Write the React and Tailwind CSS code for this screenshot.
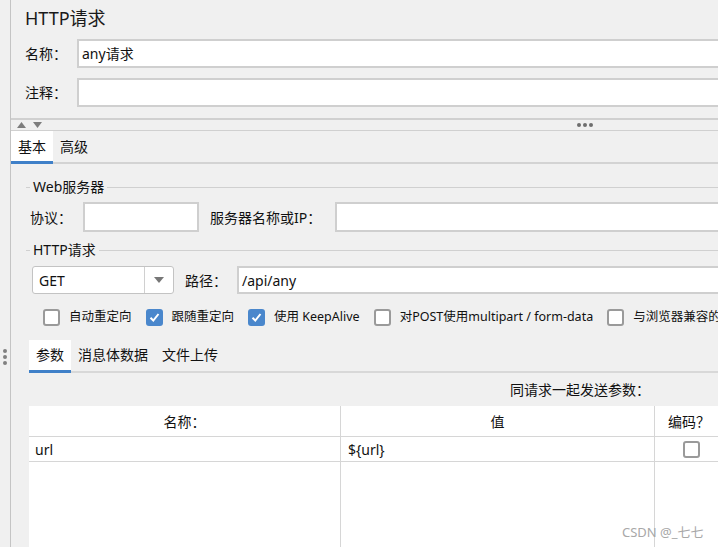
import React from "react";

const font = { fontFamily: '"Noto Sans", "Noto Sans CJK SC", sans-serif' };

const Legend = ({ text }) => (
  <div className="flex items-center h-[20px] ml-[15px]">
    <div className="w-[4px] h-px bg-[#d0d0d0]" />
    <span className="mx-[3px] text-[14px] leading-[20px] text-[#111]">{text}</span>
    <div className="flex-1 h-px bg-[#d0d0d0]" />
  </div>
);

const CheckBox = ({ checked, label }) => (
  <div className="flex items-center gap-[9px] shrink-0">
    {checked ? (
      <div className="w-[17px] h-[17px] rounded-[3px] bg-[#4a87cc] flex items-center justify-center">
        <svg width="11" height="11" viewBox="0 0 11 11">
          <path d="M1.5 5.8 L4.3 8.5 L9.5 2" stroke="white" strokeWidth="2" fill="none" />
        </svg>
      </div>
    ) : (
      <div className="w-[17px] h-[17px] rounded-[3px] border-2 border-[#9a9a9a] bg-white" />
    )}
    {label && <span className="text-[12.5px] text-[#111] whitespace-nowrap">{label}</span>}
  </div>
);

const Input = ({ className = "", value }) => (
  <div className={"h-full bg-white border-2 border-[#cfcfcf] flex items-center px-[3px] text-[14px] text-[#111] " + className}>
    {value}
  </div>
);

const App = () => {
  return (
    <div className="w-[718px] h-[547px] overflow-hidden bg-[#f0f0f0] flex relative" style={font}>
      {/* left strip */}
      <div className="w-[11px] shrink-0 border-r border-[#c4c4c4] flex flex-col items-start">
        <div className="mt-[349px] ml-[3px] flex flex-col gap-[2px]">
          <div className="w-[4px] h-[4px] rounded-full bg-[#808080]" />
          <div className="w-[4px] h-[4px] rounded-full bg-[#808080]" />
          <div className="w-[4px] h-[4px] rounded-full bg-[#808080]" />
        </div>
      </div>

      <div className="w-[780px] shrink-0 flex flex-col">
        <div className="h-[39px] pl-[14px] pt-[5px]">
          <span className="text-[18px] leading-[26px] text-[#1a1a1a]">HTTP请求</span>
        </div>
        <div className="h-[29px] flex items-center pl-[14px]">
          <span className="w-[52px] text-[14px] text-[#111]">名称：</span>
          <Input className="flex-1" value="any请求" />
        </div>
        <div className="h-[29px] mt-[10px] flex items-center pl-[14px]">
          <span className="w-[52px] text-[14px] text-[#111]">注释：</span>
          <Input className="flex-1" />
        </div>

        {/* splitter */}
        <div className="mt-[11px] border-t-2 border-b border-[#d0d0d0] h-[13px] flex items-center">
          <div className="flex items-center gap-[7px] ml-[6px]">
            <svg width="9" height="6" viewBox="0 0 9 6"><path d="M0 6 L4.5 0 L9 6 Z" fill="#7d7d7d" /></svg>
            <svg width="9" height="6" viewBox="0 0 9 6"><path d="M0 0 L9 0 L4.5 6 Z" fill="#7d7d7d" /></svg>
          </div>
          <div className="ml-[535px] flex gap-[2px]">
            <div className="w-[4px] h-[4px] rounded-full bg-[#6e6e6e]" />
            <div className="w-[4px] h-[4px] rounded-full bg-[#6e6e6e]" />
            <div className="w-[4px] h-[4px] rounded-full bg-[#6e6e6e]" />
          </div>
        </div>

        {/* tabs */}
        <div className="flex items-start border-b-2 border-[#d3d3d3]">
          <div className="h-[33px] -mb-[2px] px-[7px] pt-[1px] bg-white border-b-[3px] border-[#3f80c8] text-[14px] leading-[30px] text-[#111]">基本</div>
          <div className="h-[31px] px-[7px] pt-[1px] text-[14px] leading-[30px] text-[#111]">高级</div>
        </div>

        <div className="mt-[13px]">
          <Legend text="Web服务器" />
        </div>
        <div className="mt-[5px] h-[30px] flex items-center ml-[19px]">
          <span className="w-[53px] text-[14px] text-[#111]">协议：</span>
          <Input className="w-[116px]" />
          <span className="ml-[11px] w-[125px] text-[14px] text-[#111] whitespace-nowrap">服务器名称或IP：</span>
          <Input className="flex-1" />
        </div>

        <div className="mt-[8px]">
          <Legend text="HTTP请求" />
        </div>
        <div className="mt-[6px] h-[28px] flex items-center ml-[21px]">
          <div className="w-[142px] h-full bg-white border border-[#c3c3c3] rounded-[3px] flex">
            <div className="w-[112px] border-r border-[#d0d0d0] flex items-center pl-[6px] text-[14px] text-[#111]">GET</div>
            <div className="flex-1 flex items-center justify-center">
              <svg width="10" height="6" viewBox="0 0 10 6"><path d="M0 0 L10 0 L5 6 Z" fill="#777" /></svg>
            </div>
          </div>
          <span className="ml-[11px] w-[52px] text-[14px] text-[#111]">路径：</span>
          <Input className="flex-1" value="/api/any" />
        </div>

        <div className="mt-[13px] h-[20px] flex items-center gap-[14px] ml-[32px]">
          <CheckBox label="自动重定向" />
          <CheckBox checked label="跟随重定向" />
          <CheckBox checked label="使用 KeepAlive" />
          <CheckBox label="对POST使用multipart / form-data" />
          <CheckBox label="与浏览器兼容的头" />
        </div>

        {/* sub tabs */}
        <div className="mt-[13px] ml-[18px] flex items-start border-b-2 border-[#d8d8d8]">
          <div className="h-[33px] -mb-[2px] px-[7px] bg-white border-b-[3px] border-[#3f80c8] text-[14px] leading-[30px] text-[#111]">参数</div>
          <div className="h-[31px] px-[7px] text-[14px] leading-[30px] text-[#111]">消息体数据</div>
          <div className="h-[31px] px-[7px] text-[14px] leading-[30px] text-[#111]">文件上传</div>
        </div>
        <div className="h-[33px] ml-[18px] flex items-center pl-[481px] text-[14px] text-[#111] whitespace-nowrap">
          同请求一起发送参数：
        </div>

        {/* table */}
        <div className="flex-1 ml-[18px] bg-white grid grid-cols-[312px_314px_80px] grid-rows-[31px_25px_1fr]">
          <div className="border-r border-b border-[#d6d6d6] flex items-center justify-center text-[14px] text-[#111]">名称：</div>
          <div className="border-r border-b border-[#d6d6d6] flex items-center justify-center text-[14px] text-[#111]">值</div>
          <div className="border-b border-[#d6d6d6] flex items-center pl-[13px] text-[14px] text-[#111]">编码？</div>
          <div className="border-r border-b border-[#d6d6d6] flex items-center pl-[6px] text-[14px] text-[#111]">url</div>
          <div className="border-r border-b border-[#d6d6d6] flex items-center pl-[7px] text-[14px] text-[#111]">{"${url}"}</div>
          <div className="border-b border-[#d6d6d6] flex items-center pl-[28px]">
            <CheckBox />
          </div>
          <div className="border-r border-[#d6d6d6]" />
          <div className="border-r border-[#d6d6d6]" />
          <div />
        </div>
      </div>

      <div className="absolute left-[622px] top-[523px] text-[13px] text-[#a8a8a8] whitespace-nowrap">CSDN @_七七</div>
    </div>
  );
};

export default App;
